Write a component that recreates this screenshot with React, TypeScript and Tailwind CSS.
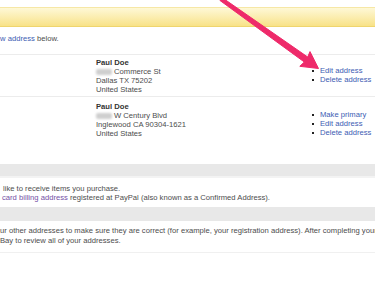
import React from "react";

const link = "text-[#3d5db3]";

function Blur({ w = 16 }: { w?: number }) {
  return (
    <span
      className="mr-[2px] inline-block h-[6px] rounded-[2px] bg-[#cfcfcf] align-middle blur-[1.2px]"
      style={{ width: w }}
    />
  );
}

function Links({ items }: { items: string[] }) {
  return (
    <ul className="flex flex-col">
      {items.map((t) => (
        <li key={t} className="flex items-center">
          <span className="mr-[6px] inline-block h-[2px] w-[2px] bg-[#222]" />
          <span className={link}>{t}</span>
        </li>
      ))}
    </ul>
  );
}

function AddressRow({
  street,
  city,
  links,
  className,
}: {
  street: string;
  city: string;
  links: string[];
  className: string;
}) {
  return (
    <div className={`flex ${className}`}>
      <div className="ml-[96px] w-[216px] shrink-0">
        <div className="font-bold text-[#333]">Paul Doe</div>
        <div>
          <Blur />
          {street}
        </div>
        <div>{city}</div>
        <div>United States</div>
      </div>
      <div className="mt-[8px]">
        <Links items={links} />
      </div>
    </div>
  );
}

export default function App() {
  return (
    <div
      className="relative h-[281px] w-[375px] overflow-hidden bg-white text-[7.65px] leading-[9px] text-[#4d4d4d]"
      style={{ fontFamily: '"Liberation Sans", Arial, sans-serif' }}
    >
      <div className="pt-[7px]">
        <div className="h-[20px] border-t border-b border-t-[#f6e7a6] border-b-[#efd56e] bg-gradient-to-b from-[#fef8d6] to-[#f8e287]" />
      </div>

      <div className="border-b border-[#ececec] pt-[7px] pb-[11px] whitespace-nowrap">
        <span className={link}>w address</span> below.
      </div>

      <AddressRow
        className="h-[42px] border-b border-[#ececec] pt-[3px]"
        street="Commerce St"
        city="Dallas TX 75202"
        links={["Edit address", "Delete address"]}
      />
      <AddressRow
        className="h-[67px] pt-[5px]"
        street="W Century Blvd"
        city="Inglewood CA 90304-1621"
        links={["Make primary", "Edit address", "Delete address"]}
      />

      <div className="h-[14px] border-b-2 border-[#f3f3f3] bg-[#e8e8e8]" />

      <div className="pt-[6px] pb-[5px] whitespace-nowrap">
        <div className="pl-[3px]">like to receive items you purchase.</div>
        <div className="pl-[2px]">
          <span className="text-[#7550a6]">card billing address</span> registered at
          PayPal (also known as a Confirmed Address).
        </div>
      </div>

      <div className="h-[14px] bg-[#e8e8e8]" />

      <div className="border-b border-[#f0f0f0] pt-[5px] pb-[6px] leading-[10px] whitespace-nowrap">
        <div>
          ur other addresses to make sure they are correct (for example, your registration
          address). After completing your
        </div>
        <div>Bay to review all of your addresses.</div>
      </div>

      <svg
        className="pointer-events-none absolute top-0 left-0"
        width="375"
        height="281"
        viewBox="0 0 375 281"
      >
        <polygon
          points="222,-2.5 307.7,57 310,51.6 318.5,68.5 299.8,66.3 304.3,62 220,0.5"
          fill="#ee2a6a"
          stroke="#ee2a6a"
          strokeWidth="1"
          strokeLinejoin="round"
        />
      </svg>
    </div>
  );
}
